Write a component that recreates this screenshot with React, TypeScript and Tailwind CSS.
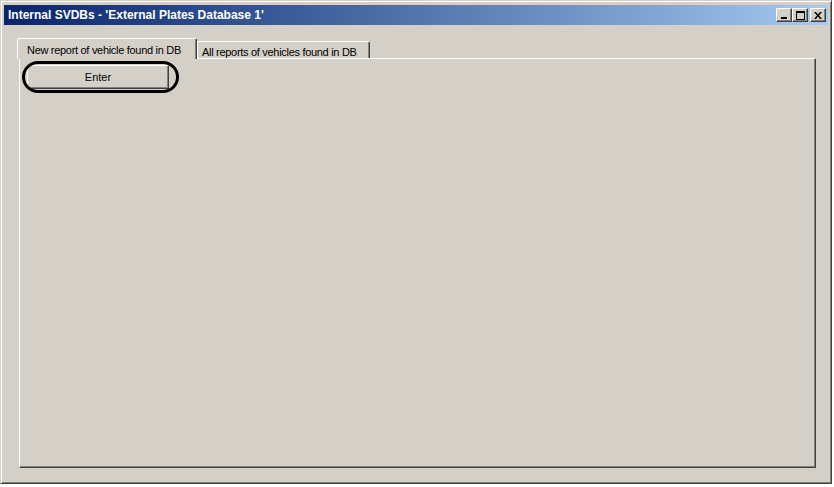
import React from 'react';

const font = { fontFamily: '"Liberation Sans", Arial, sans-serif' };

function CaptionButton({ children, className = '' }: { children: React.ReactNode; className?: string }) {
  return (
    <div
      className={
        'relative flex h-[14px] w-[16px] items-center justify-center border border-t-white border-l-white border-r-[#404040] border-b-[#404040] bg-[#d4d0c8] shadow-[inset_-1px_-1px_0_#808080] ' +
        className
      }
    >
      {children}
    </div>
  );
}

function TitleBar() {
  return (
    <div className="mt-[1px] flex h-[20px] items-center justify-between bg-gradient-to-r from-[#0a246a] to-[#a6caf0] pl-[4px] pr-[2px]">
      <span className="text-[12px] font-bold text-white" style={font}>
        Internal SVDBs - 'External Plates Database 1'
      </span>
      <div className="flex items-center">
        <CaptionButton>
          <div className="mt-[6px] ml-[-1px] h-[2px] w-[6px] bg-black" />
        </CaptionButton>
        <CaptionButton>
          <div className="h-[9px] w-[9px] border border-t-2 border-black" />
        </CaptionButton>
        <CaptionButton className="ml-[2px]">
          <svg width="8" height="7" viewBox="0 0 8 7">
            <path d="M0 0h2l2 2.5L6 0h2L5 3.5 8 7H6L4 4.5 2 7H0l3-3.5z" fill="black" />
          </svg>
        </CaptionButton>
      </div>
    </div>
  );
}

function Tabs() {
  return (
    <div className="relative z-10 flex h-[20px] items-end" style={font}>
      <div className="-mb-[1px] -ml-[2px] flex h-[21px] w-[180px] items-start rounded-t-[2px] border-l border-t border-r border-l-white border-t-white border-r-[#404040] bg-[#d4d0c8] pl-[9px] pt-[3px] text-[11px] tracking-[-0.3px] text-black shadow-[inset_-1px_0_0_#808080]">
        New report of vehicle found in DB
      </div>
      <div className="flex h-[17px] w-[173px] items-start rounded-t-[2px] border-l border-t border-r border-l-white border-t-white border-r-[#404040] bg-[#d4d0c8] pl-[4px] pt-[2px] text-[11px] tracking-[-0.3px] text-black shadow-[inset_-1px_0_0_#808080]">
        All reports of vehicles found in DB
      </div>
    </div>
  );
}

export default function App() {
  return (
    <div className="h-[487px] w-[834px] overflow-hidden bg-white">
      <div className="h-[484px] w-[832px] border border-t-[#d4d0c8] border-l-[#d4d0c8] border-r-[#404040] border-b-[#404040] bg-[#d4d0c8] shadow-[inset_1px_1px_0_white,inset_-1px_-1px_0_#808080] p-[3px]">
        <TitleBar />
        <div className="ml-[15px] mt-[13px] w-[797px]">
          <Tabs />
          <div className="h-[410px] border border-t-white border-l-white border-r-[#404040] border-b-[#404040] shadow-[inset_-1px_-1px_0_#808080] pl-[7px] pt-[6px]">
            <div className="relative w-[142px]">
              <button
                className="flex h-[24px] w-[142px] items-center justify-center border border-t-white border-l-white border-r-[#404040] border-b-[#404040] bg-[#d4d0c8] text-[11px] text-black shadow-[inset_-1px_-1px_0_#808080]"
                style={font}
              >
                Enter
              </button>
              <div className="pointer-events-none absolute -left-[5px] -top-[4px] h-[32px] w-[157px] rounded-full border-[3px] border-black" />
            </div>
          </div>
        </div>
      </div>
    </div>
  );
}
